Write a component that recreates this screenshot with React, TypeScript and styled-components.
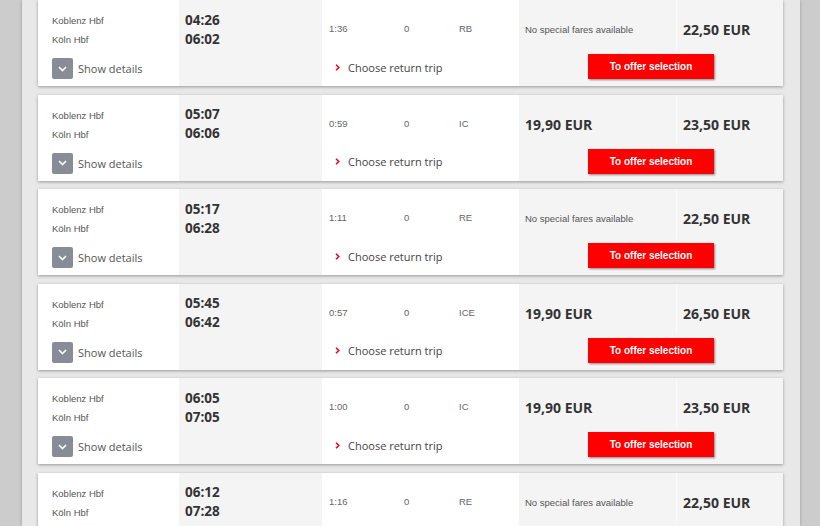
import styled, { createGlobalStyle } from "styled-components";

const GlobalStyle = createGlobalStyle`
	html, body {
		margin: 0;
		padding: 0;
		height: 526px;
		overflow: hidden;
		background: #cccccc;
	}
`;

const Page = styled.div`
	width: 778px;
	height: 526px;
	margin-left: 22px;
	padding: 0 17px 0 16px;
	box-sizing: border-box;
	background: #e8e8e8;
	box-shadow: 0 0 3px rgba(0, 0, 0, 0.25);
	overflow: hidden;
`;

const Card = styled.div`
	display: grid;
	grid-template-columns: 141px 143px 197px 157px 107px;
	grid-template-rows: 50px 36px;
	height: 86px;
	margin-bottom: 8.5px;
	background: #fff;
	box-shadow: 0 1px 3px rgba(0, 0, 0, 0.35);
`;

const Route = styled.div`
	grid-row: 1 / 3;
	padding: 11px 0 0 14px;
	display: flex;
	flex-direction: column;
`;

const Station = styled.div`
	font-family: "Liberation Sans", Arial, sans-serif;
	font-size: 9.5px;
	line-height: 19px;
	color: #555;
`;

const DetailsToggle = styled.div`
	display: flex;
	align-items: center;
	gap: 5px;
	margin-top: 9px;
	font-family: "Open Sans", sans-serif;
	font-size: 11px;
	color: #555;
`;

const ToggleBox = styled.span`
	width: 21px;
	height: 21px;
	border-radius: 2px;
	background: #878c96;
	display: flex;
	align-items: center;
	justify-content: center;
`;

const Times = styled.div`
	grid-row: 1 / 3;
	background: #f4f4f4;
	padding: 10.5px 0 0 6px;
	font-family: "Open Sans", sans-serif;
	font-weight: 700;
	font-size: 13.5px;
	line-height: 19px;
	color: #333;
`;

const Meta = styled.div`
	display: grid;
	grid-template-columns: 75px 55px auto;
	padding: 21px 0 0 7px;
	font-family: "Liberation Sans", Arial, sans-serif;
	font-size: 9.5px;
	line-height: 16px;
	color: #666;
`;

const ReturnTrip = styled.div`
	grid-column: 3;
	grid-row: 2;
	display: flex;
	align-items: center;
	gap: 8px;
	padding: 0 0 2px 13px;
	font-family: "Open Sans", sans-serif;
	font-size: 11px;
	color: #444;
`;

const Fare = styled.div<{ $divider?: boolean }>`
	background: #f4f4f4;
	border-left: ${(p) => (p.$divider ? "1px solid #fbfbfb" : "none")};
	padding: 20px 0 0 6px;
	box-sizing: border-box;
`;

const Price = styled.span`
	font-family: "Open Sans", sans-serif;
	font-weight: 700;
	font-size: 14px;
	line-height: 20px;
	color: #333;
`;

const NoFare = styled.span`
	display: block;
	padding-top: 2px;
	font-family: "Liberation Sans", Arial, sans-serif;
	font-size: 9.5px;
	line-height: 16px;
	color: #555;
`;

const Actions = styled.div`
	grid-column: 4 / 6;
	background: #f4f4f4;
	display: flex;
	justify-content: center;
	align-items: flex-start;
	padding-top: 4px;
`;

const OfferButton = styled.button`
	width: 126px;
	height: 25px;
	border: none;
	background: #ff0000;
	color: #fff;
	font-family: "Liberation Sans", Arial, sans-serif;
	font-weight: 700;
	font-size: 10px;
	box-shadow: 1px 1px 2px rgba(0, 0, 0, 0.45);
	cursor: pointer;
`;

type Trip = {
	dep: string;
	arr: string;
	duration: string;
	product: string;
	special?: string;
	price: string;
};

const trips: Trip[] = [
	{ dep: "04:26", arr: "06:02", duration: "1:36", product: "RB", price: "22,50 EUR" },
	{ dep: "05:07", arr: "06:06", duration: "0:59", product: "IC", special: "19,90 EUR", price: "23,50 EUR" },
	{ dep: "05:17", arr: "06:28", duration: "1:11", product: "RE", price: "22,50 EUR" },
	{ dep: "05:45", arr: "06:42", duration: "0:57", product: "ICE", special: "19,90 EUR", price: "26,50 EUR" },
	{ dep: "06:05", arr: "07:05", duration: "1:00", product: "IC", special: "19,90 EUR", price: "23,50 EUR" },
	{ dep: "06:12", arr: "07:28", duration: "1:16", product: "RE", price: "22,50 EUR" },
];

function ChevronDown() {
	return (
		<svg width="9" height="6" viewBox="0 0 9 6">
			<polyline points="1,1 4.5,4.5 8,1" fill="none" stroke="#fff" strokeWidth="1.6" />
		</svg>
	);
}

function ChevronRight() {
	return (
		<svg width="5" height="7" viewBox="0 0 5 7">
			<polyline points="1,0.8 3.8,3.5 1,6.2" fill="none" stroke="#ec0016" strokeWidth="1.5" />
		</svg>
	);
}

export default function App() {
	return (
		<>
			<GlobalStyle />
			<Page>
				{trips.map((t) => (
					<Card key={t.dep}>
						<Route>
							<Station>Koblenz Hbf</Station>
							<Station>Köln Hbf</Station>
							<DetailsToggle>
								<ToggleBox>
									<ChevronDown />
								</ToggleBox>
								Show details
							</DetailsToggle>
						</Route>
						<Times>
							<div>{t.dep}</div>
							<div>{t.arr}</div>
						</Times>
						<Meta>
							<span>{t.duration}</span>
							<span>0</span>
							<span>{t.product}</span>
						</Meta>
						<Fare>
							{t.special ? <Price>{t.special}</Price> : <NoFare>No special fares available</NoFare>}
						</Fare>
						<Fare $divider>
							<Price>{t.price}</Price>
						</Fare>
						<ReturnTrip>
							<ChevronRight />
							Choose return trip
						</ReturnTrip>
						<Actions>
							<OfferButton>To offer selection</OfferButton>
						</Actions>
					</Card>
				))}
			</Page>
		</>
	);
}
